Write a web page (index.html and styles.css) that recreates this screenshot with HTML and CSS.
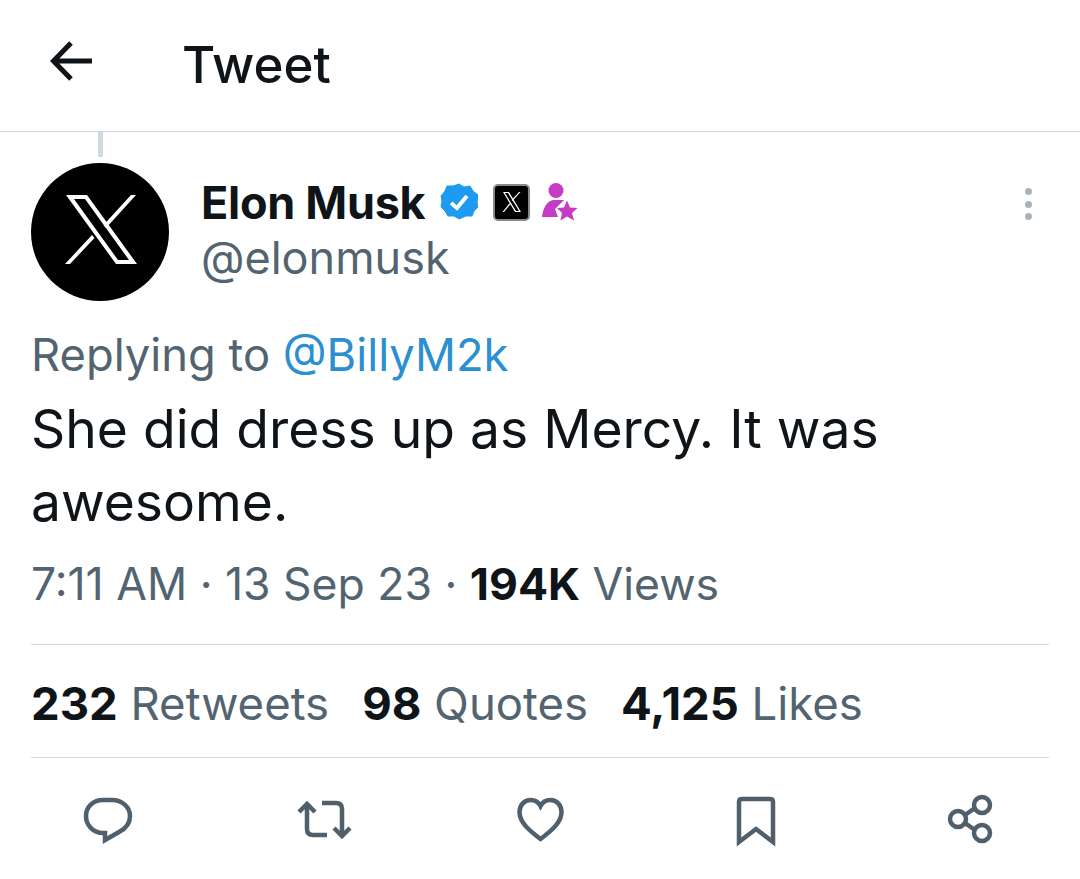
FILE: index.html
```html
<!DOCTYPE html>
<html lang="en">
<head>
<meta charset="utf-8">
<title>Tweet</title>
<link rel="stylesheet" href="styles.css">
</head>
<body>
<header class="topbar">
  <svg class="back" viewBox="0 0 42 40" width="42" height="40"><path d="M21 2 3.500 20 21 38M3.500 20H42" fill="none" stroke="#0f1419" stroke-width="5"/></svg>
  <h1 class="title">Tweet</h1>
</header>
<main class="tweet">
  <div class="thread"></div>
  <div class="author">
    <div class="avatar">
      <svg viewBox="0 0 138 138" width="138" height="138"><path d="M35 32h21l50 69H85ZM43 36l44 61h11L54 36Z" fill="#fff" fill-rule="evenodd"/><path d="M100 32h5L75 65l-2.500-3ZM61 72l2.500 3L39 101h-5Z" fill="#fff"/></svg>
    </div>
    <div class="who">
      <div class="name-row">
        <span class="name">Elon Musk</span>
        <svg class="verified" viewBox="0 0 38 38" width="38" height="38"><path d="M19 1l5 3 6-1 3 5 5 4-1 7 1 5-4 4-2 5-6 0-7 3-5-3-6 0-3-5-4-4 1-6-1-5 4-5 2-5 6 0Z" fill="#1d9bf0" stroke="#1d9bf0" stroke-width="1" stroke-linejoin="round"/><path d="M11 20l6 5 10-12" fill="none" stroke="#fff" stroke-width="4"/></svg>
        <span class="xbadge"><svg viewBox="0 0 24 24" width="24" height="24"><path d="M3 2h6l12 20h-6ZM5 3l11 18h3L8 3Z" fill="#fff" fill-rule="evenodd"/><path d="M19 2h1.500l-8 9-.8-1ZM10.300 12.500l.8 1L4 22H2.500Z" fill="#fff"/></svg></span>
        <svg class="mod" viewBox="0 0 37 38" width="37" height="38"><circle cx="15" cy="7.500" r="7.500" fill="#c63bc4"/><path d="M1 34C2 25 6 18 12 17H23L14 26l3 8Z" fill="#c63bc4"/><path d="M26 17.500l3 7 7.500.5-5.500 5 2 7.500-7-4-6.500 4 1.500-7.500-5-5 7-.5Z" fill="#c63bc4"/></svg>
      </div>
      <div class="handle">@elonmusk</div>
    </div>
    <div class="more"><span class="dot"></span><span class="dot"></span><span class="dot"></span></div>
  </div>
  <p class="reply">Replying to <span class="link">@BillyM2k</span></p>
  <p class="text">She did dress up as Mercy. It was awesome.</p>
  <p class="meta">7:11 AM · 13 Sep 23 · <b>194K</b> Views</p>
  <div class="stats">
    <span class="stat"><b>232</b> Retweets</span>
    <span class="stat"><b>98</b> Quotes</span>
    <span class="stat"><b>4,125</b> Likes</span>
  </div>
  <div class="actions">
    <svg viewBox="0 0 50 50" width="50" height="50"><path d="M20 5h9c10 0 18 7 18 16 0 8-5 13-11 16l-14 8v-7h-2C10 38 3 30 3 21 3 12 10 5 20 5Z" fill="none" stroke="#4f5f6b" stroke-width="4.500"/></svg>
    <svg viewBox="0 0 58 50" width="58" height="50"><path d="M10 9v25c0 4 2 6 6 6h14M2 17l8-8 8 8M25 8h14c4 0 6 2 6 6v27M37 33l8 8 8-8" fill="none" stroke="#4f5f6b" stroke-width="4.500"/></svg>
    <svg viewBox="2.500 0 50 50" width="50" height="50"><path d="M24 44C12 35 3 27 3 17 3 10 8 5 14 5c4 0 8 2 10 6 2-4 6-6 10-6 6 0 11 5 11 12 0 10-9 18-21 27Z" fill="none" stroke="#4f5f6b" stroke-width="4.500"/></svg>
    <svg viewBox="1 0 50 50" width="50" height="50"><path d="M8 47V7c0-2 1-3 3-3h28c2 0 3 1 3 3v40L25 34Z" fill="none" stroke="#4f5f6b" stroke-width="4.500"/></svg>
    <svg viewBox="0 0 50 50" width="50" height="50"><g fill="none" stroke="#4f5f6b" stroke-width="4.500"><circle cx="12" cy="24" r="8"/><circle cx="36" cy="10" r="8"/><circle cx="36" cy="38" r="8"/><path d="M19 20l10-7M19 28l10 7"/></g></svg>
  </div>
</main>
</body>
</html>
```
FILE: styles.css
```css
* { box-sizing: border-box; }
html, body { margin: 0; padding: 0; }
body { background: #fff; color: #0f1419; font-family: Inter, "Liberation Sans", sans-serif; width: 1080px; height: 879px; overflow: hidden; }
.topbar { height: 132px; border-bottom: 1px solid #cfd9de; display: flex; align-items: center; padding-left: 50px; gap: 90px; padding-bottom: 2px; }
.back { flex: none; margin-bottom: 8px; }
.title { margin: 0; font-size: 51px; font-weight: 500; line-height: 60px; }
.tweet { padding: 0 31px; }
.thread { width: 5px; height: 25px; background: #cfd9de; margin-left: 67px; }
.author { display: flex; margin-top: 6px; height: 138px; }
.avatar { width: 138px; height: 138px; border-radius: 50%; background: #000; flex: none; }
.avatar svg { display: block; }
.who { margin-left: 32px; flex: 1; padding-top: 11px; }
.name-row { display: flex; align-items: center; height: 56px; }
.name { font-size: 45px; font-weight: 700; letter-spacing: -0.3px; }
.verified { margin-left: 15px; }
.xbadge { width: 37px; height: 37px; margin-left: 15px; background: #000; border: 2px solid #888; border-radius: 5px; display: flex; align-items: center; justify-content: center; }
.mod { margin-left: 11px; }
.handle { font-size: 45px; line-height: 56px; color: #536471; }
.more { display: flex; flex-direction: column; gap: 5.5px; padding-top: 25px; margin-right: 17px; }
.dot { width: 7px; height: 7px; border-radius: 50%; background: #a9b4ba; }
.reply { margin: 25px 0 0; font-size: 45.3px; line-height: 58px; color: #536471; }
.link { color: #2b8fd0; }
.text { margin: 8px 0 0; font-size: 53.4px; line-height: 73px; font-weight: 400; width: 900px; }
.meta { margin: 17px 0 0; font-size: 44.5px; line-height: 58px; color: #536471; }
.meta b, .stat b { color: #0f1419; font-weight: 700; }
.stats { margin-top: 31px; height: 114px; padding-top: 4px; border-top: 1px solid #cfd9de; border-bottom: 1px solid #cfd9de; display: flex; align-items: center; gap: 33px; font-size: 45.5px; color: #536471; }
.actions { display: flex; justify-content: space-between; align-items: center; padding: 37px 53px 0 52px; }
.actions svg { overflow: visible; }
```
